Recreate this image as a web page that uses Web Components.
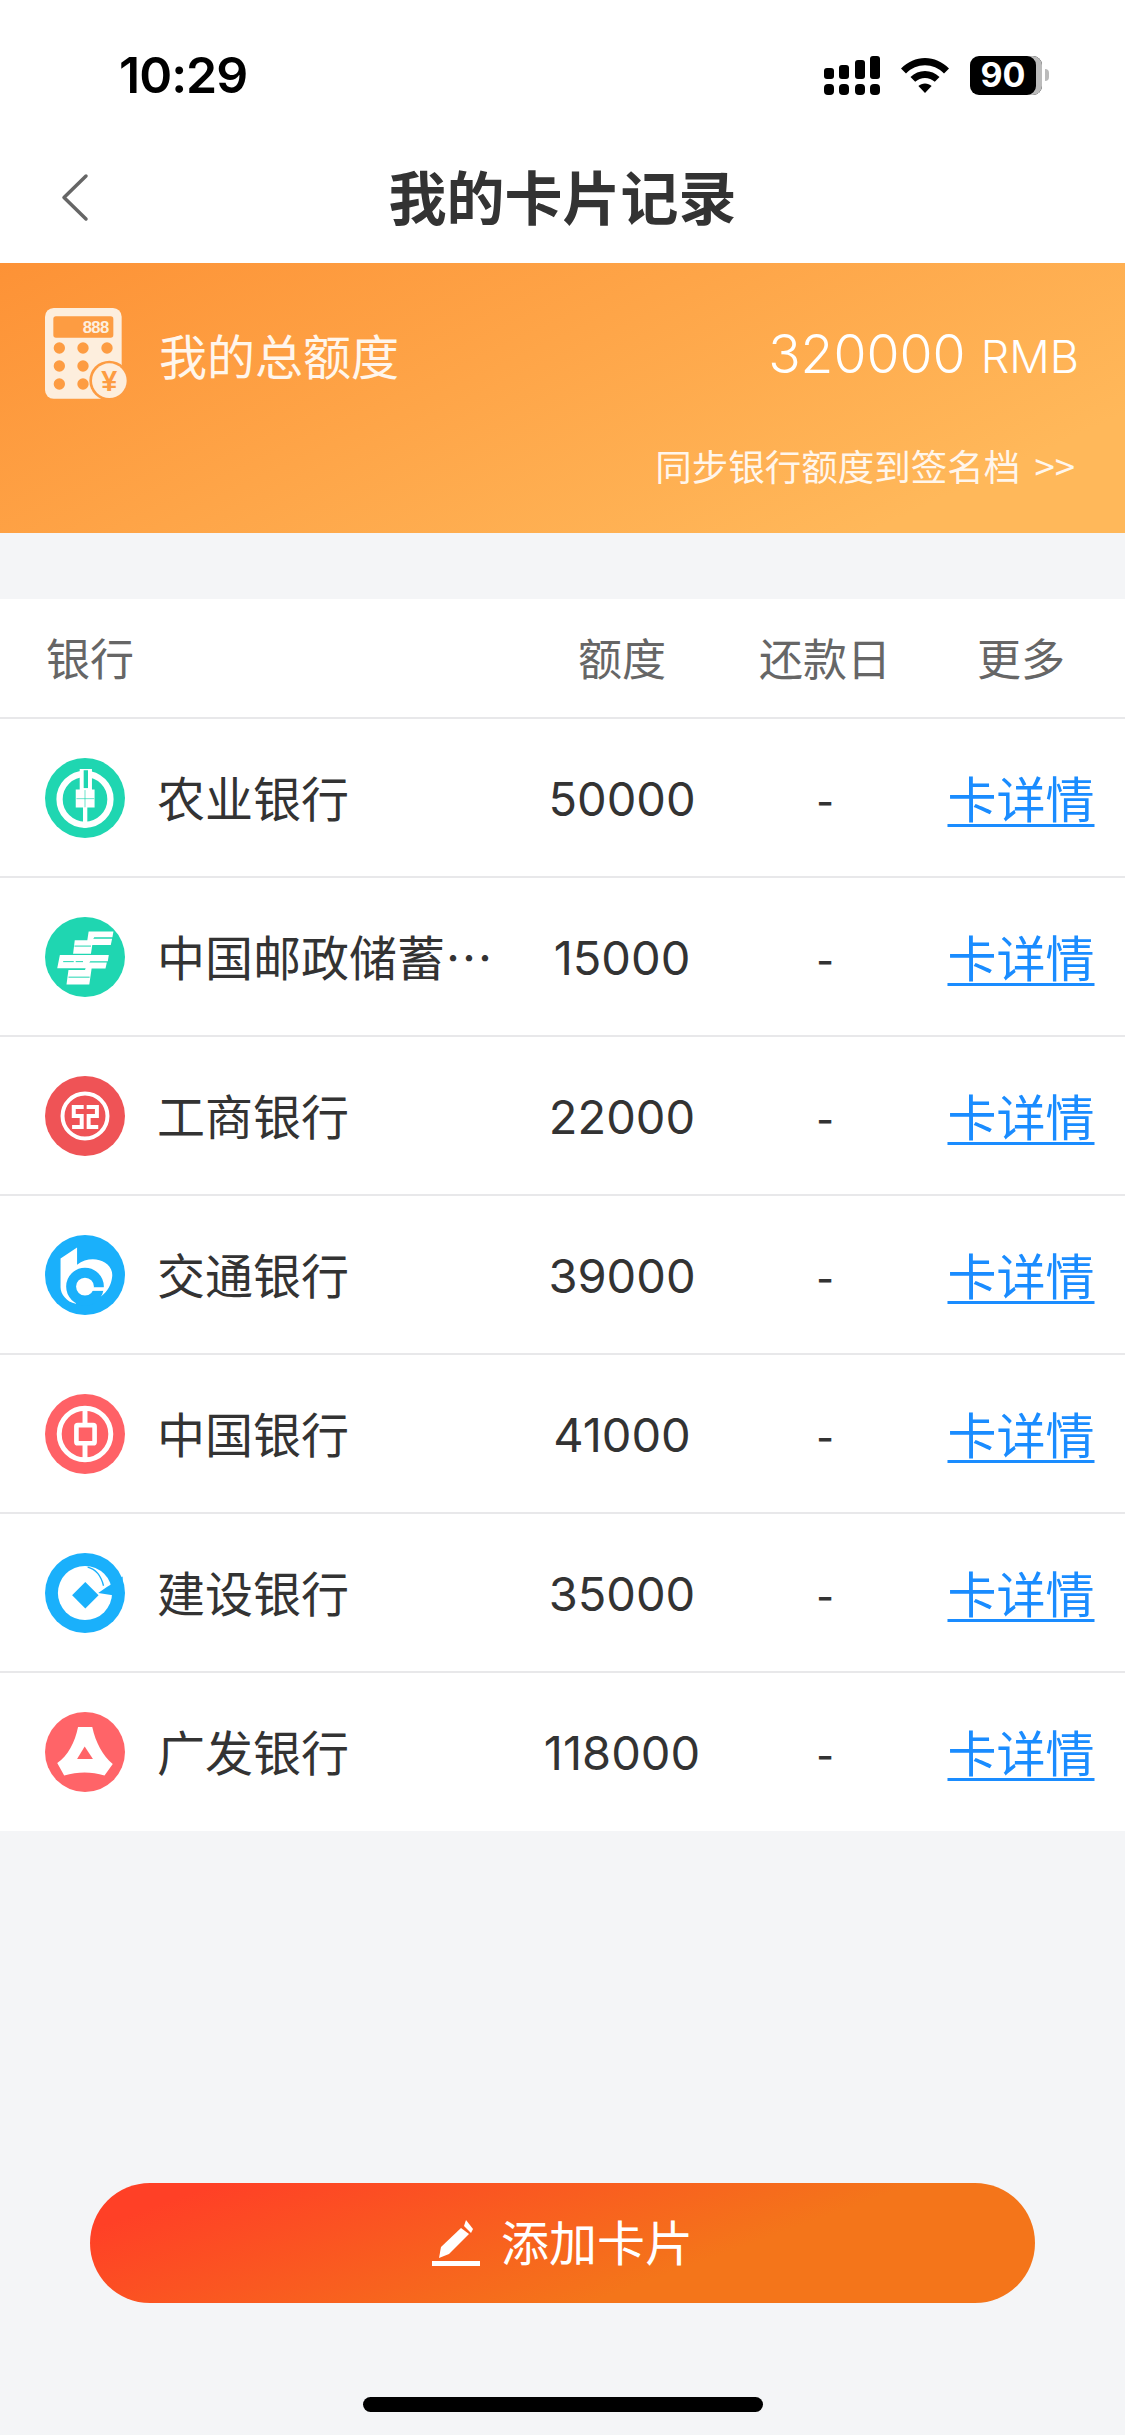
<!DOCTYPE html>
<html lang="zh">
<head>
<meta charset="utf-8">
<title>我的卡片记录</title>
<style>
    html, body { margin: 0; padding: 0; background: #f4f5f7; }
    body { font-family: "Noto Sans CJK SC", "Noto Sans", sans-serif; color: #333; }
</style>
</head>
<body>
<card-page>
    <status-bar slot="top" time="10:29" battery="90"></status-bar>
    <nav-bar slot="top">我的卡片记录</nav-bar>
    <limit-banner slot="top" total="320000" unit="RMB" link="同步银行额度到签名档 &gt;&gt;">我的总额度</limit-banner>
    <card-table>
        <card-row bank="abc" amount="50000">农业银行</card-row>
        <card-row bank="psbc" amount="15000">中国邮政储蓄银行</card-row>
        <card-row bank="icbc" amount="22000">工商银行</card-row>
        <card-row bank="bocom" amount="39000">交通银行</card-row>
        <card-row bank="boc" amount="41000">中国银行</card-row>
        <card-row bank="ccb" amount="35000">建设银行</card-row>
        <card-row bank="cgb" amount="118000">广发银行</card-row>
    </card-table>
    <add-button slot="bottom">添加卡片</add-button>
    <home-indicator slot="bottom"></home-indicator>
</card-page>

<script>
class CardPage extends HTMLElement {
    constructor() {
        super();
        this.attachShadow({ mode: 'open' });
        this.shadowRoot.innerHTML = `
            <style>
                :host { display: flex; flex-direction: column; width: 1125px; height: 2435px; overflow: hidden; background: #f4f5f7; }
                main { flex: 1; padding-top: 66px; }
            </style>
            <slot name="top"></slot>
            <main><slot></slot></main>
            <slot name="bottom"></slot>
        `;
    }
}

class StatusBar extends HTMLElement {
    constructor() {
        super();
        this.attachShadow({ mode: 'open' });
    }

    connectedCallback() {
        const time = this.getAttribute('time');
        const battery = this.getAttribute('battery');
        this.shadowRoot.innerHTML = `
            <style>
                :host { display: flex; justify-content: space-between; align-items: center; height: 135px; padding: 15px 76px 0 119px; box-sizing: border-box; background: #fff; color: #000; }
                .time { font: 600 50px/1 Inter, "Liberation Sans", sans-serif; letter-spacing: -1px; }
                .icons { display: flex; align-items: center; gap: 21px; }
                svg { display: block; }
                .battery { display: flex; align-items: center; gap: 3px; }
                .cell { width: 66px; height: 39px; padding-right: 6px; border-radius: 9px; background: #000; color: #fff; box-shadow: inset -6px 0 0 #bbb; display: flex; align-items: center; justify-content: center; font: 700 34px/1 Inter, "Liberation Sans", sans-serif; }
                .nub { width: 4px; height: 12px; border-radius: 0 6px 6px 0; background: #bbb; }
            </style>
            <span class="time">${time}</span>
            <div class="icons">
                <svg width="56" height="39" viewBox="0 0 56 39" fill="#000">
                    <rect x="0" y="12" width="10" height="11" rx="3"/><rect x="15" y="9" width="10" height="14" rx="3"/>
                    <rect x="31" y="4" width="10" height="19" rx="3"/><rect x="46" y="0" width="10" height="23" rx="3"/>
                    <rect x="0" y="28" width="10" height="11" rx="4"/><rect x="15" y="28" width="10" height="11" rx="4"/>
                    <rect x="31" y="28" width="10" height="11" rx="4"/><rect x="46" y="28" width="10" height="11" rx="4"/>
                </svg>
                <svg width="48" height="35" viewBox="0 0 48 35" fill="#000">
                    <path d="M24 0C33 0 41 3.600 48 10.500L43 15.500C37.500 10 31 7.300 24 7.300S10.500 10 5 15.500L0 10.500C7 3.600 15 0 24 0Z"/>
                    <path d="M24 13C29.500 13 34.500 15 38.500 19L33.800 23.800C31 21.300 27.600 20 24 20S17 21.300 14.200 23.800L9.500 19C13.500 15 18.500 13 24 13Z"/>
                    <path d="M24 25.500C26.600 25.500 28.800 26.400 30.600 28L24 35L17.400 28C19.200 26.400 21.400 25.500 24 25.500Z"/>
                </svg>
                <div class="battery"><div class="cell">${battery}</div><div class="nub"></div></div>
            </div>
        `;
    }
}

class NavBar extends HTMLElement {
    constructor() {
        super();
        this.attachShadow({ mode: 'open' });
        this.shadowRoot.innerHTML = `
            <style>
                :host { display: grid; grid-template-columns: 120px 1fr 120px; align-items: center; height: 128px; padding-bottom: 8px; box-sizing: border-box; background: #fff; }
                svg { display: block; margin: 5px 0 0 60px; }
                h1 { margin: 0; text-align: center; font-size: 58px; line-height: 1; font-weight: 700; color: #333; }
            </style>
            <svg width="30" height="49" viewBox="0 0 30 49" fill="none" stroke="#666" stroke-width="3.500" stroke-linecap="round" stroke-linejoin="round"><path d="M26 3L4 24.500L26 46"/></svg>
            <h1><slot></slot></h1>
            <span></span>
        `;
    }
}

class LimitBanner extends HTMLElement {
    constructor() {
        super();
        this.attachShadow({ mode: 'open' });
    }

    connectedCallback() {
        this.shadowRoot.innerHTML = `
            <style>
                :host { display: flex; flex-direction: column; justify-content: space-between; height: 270px; padding: 45px 50px 49px 45px; box-sizing: border-box; background: linear-gradient(155deg, #fd9236 0%, #ffb85a 85%); color: #fff; }
                .top { display: flex; align-items: center; height: 92px; }
                svg { display: block; flex: none; margin-right: 31px; }
                .label { font-size: 48px; font-weight: 400; line-height: 1; color: #fff6ec; }
                .total { margin-left: auto; margin-right: -4px; font: 350 53.500px/1 Inter, "Noto Sans", sans-serif; color: #fff; }
                .total small { font-size: 45px; }
                .link { text-align: right; font-size: 36.500px; font-weight: 400; line-height: 1; word-spacing: 6px; color: #fff6ec; }
            </style>
            <div class="top">
                <svg width="83" height="92" viewBox="47 58 249 276">
                    <rect x="47" y="58" width="230" height="272" rx="26" fill="#fdeedd"/>
                    <rect x="72" y="83" width="180" height="64" rx="8" fill="#fd9c42"/>
                    <text x="240" y="134" text-anchor="end" textLength="80" font-family="Liberation Sans" font-weight="700" font-size="50" fill="#fdeedd">888</text>
                    <g fill="#fd9c42">
                        <circle cx="90" cy="178" r="17"/><circle cx="161" cy="178" r="17"/><circle cx="233" cy="178" r="17"/>
                        <circle cx="90" cy="232" r="17"/><circle cx="161" cy="232" r="17"/>
                        <circle cx="90" cy="286" r="17"/><circle cx="161" cy="286" r="17"/>
                        <circle cx="240" cy="276" r="60"/>
                    </g>
                    <circle cx="240" cy="276" r="52" fill="#fdeedd"/>
                    <text x="240" y="306" text-anchor="middle" font-family="Liberation Sans" font-weight="700" font-size="86" fill="#fd9c42">¥</text>
                </svg>
                <span class="label"><slot></slot></span>
                <span class="total">${this.getAttribute('total')} <small>${this.getAttribute('unit')}</small></span>
            </div>
            <div class="link">${this.getAttribute('link')}</div>
        `;
    }
}

class CardTable extends HTMLElement {
    constructor() {
        super();
        this.attachShadow({ mode: 'open' });
        this.shadowRoot.innerHTML = `
            <style>
                :host { display: block; padding-bottom: 1px; background: #fff; --cols: 520px 204px 202px 190px; }
                header { display: grid; grid-template-columns: var(--cols); align-items: center; height: 115px; padding-bottom: 3px; font-size: 44px; color: #666; text-align: center; }
                header span:first-child { text-align: left; padding-left: 46px; }
            </style>
            <header><span>银行</span><span>额度</span><span>还款日</span><span>更多</span></header>
            <slot></slot>
        `;
    }
}

class CardRow extends HTMLElement {
    constructor() {
        super();
        this.attachShadow({ mode: 'open' });
    }

    connectedCallback() {
        this.shadowRoot.innerHTML = `
            <style>
                :host { display: grid; grid-template-columns: var(--cols); align-items: center; height: 159px; border-top: 2px solid #e8e8ea; box-sizing: border-box; font-size: 48px; color: #333; text-align: center; }
                .bank { display: flex; align-items: center; padding-left: 45px; text-align: left; }
                .name { width: 342px; margin-left: 32px; padding-bottom: 3px; overflow: hidden; white-space: nowrap; text-overflow: ellipsis; }
                .amount { padding-top: 2px; font: 47px/1 Inter, "Noto Sans", sans-serif; }
                .due, .more { padding-bottom: 3px; }
                a { font-size: 49px; color: #1a8cff; text-decoration: underline; text-decoration-thickness: 3px; text-underline-offset: 6px; }
            </style>
            <div class="bank"><bank-icon name="${this.getAttribute('bank')}"></bank-icon><div class="name"><slot></slot></div></div>
            <div class="amount">${this.getAttribute('amount')}</div>
            <div class="due">-</div>
            <div class="more"><a href="#">卡详情</a></div>
        `;
    }
}

// logos are traced in the coordinates of the zoomed crops, hence the odd viewBoxes
const BANK_LOGOS = {
    abc: { color: '#1fd6b1', cy: 176, body: c => `
        <circle cx="196" cy="180" r="77" fill="none" stroke="#fff" stroke-width="19"/>
        <path d="M180 88H217V150H225V205H203V265H190V205H168V150H180Z" fill="#fff"/>
        <path d="M192 92H205V146H192Z" fill="${c}"/>
        <path d="M170 178H224M196 152V204" stroke="${c}" stroke-width="2"/>` },
    psbc: { color: '#1fd6b1', cy: 173, body: c => `
        <g fill="#fff">
            <path d="M207 96H282L279 113H224L221 118H278L274 137H218L214 163H160L165 122H203Z"/>
            <path d="M120 167H268L265 186H212L209 190H262L258 208H216L209 256H140L146 212H196L198 207H112Z"/>
        </g>
        <path d="M130 187H162M168 187H190" stroke="${c}" stroke-width="3" fill="none"/>
        <path d="M164 140H214M146 234H210" stroke="${c}" stroke-width="3" fill="none"/>` },
    icbc: { color: '#ef5356', cy: 170, body: c => `
        <circle cx="196" cy="170" r="68" fill="none" stroke="#fff" stroke-width="12"/>
        <path d="M192 143H162V170H186V203H157" fill="none" stroke="#fff" stroke-width="12"/>
        <path d="M201 143H232V170H207V203H236" fill="none" stroke="#fff" stroke-width="12"/>` },
    bocom: { color: '#1ab0fb', cy: 168, body: c => `
        <path d="M122 118L172 85V137C215 102 285 125 278 175C275 198 265 218 245 232H180L168 255C140 250 122 225 122 205Z" fill="#fff"/>
        <circle cx="196" cy="203" r="42" fill="none" stroke="${c}" stroke-width="30"/>
        <path d="M215 205H255V216H215Z" fill="#fff"/>` },
    boc: { color: '#ff6166', cy: 163, body: c => `
        <circle cx="196" cy="163" r="78" fill="none" stroke="#fff" stroke-width="15"/>
        <path d="M196 85V241" stroke="#fff" stroke-width="15"/>
        <rect x="170" y="136" width="55" height="55" rx="4" fill="${c}" stroke="#fff" stroke-width="14"/>` },
    ccb: { color: '#1ab0fb', cy: 190, body: c => `
        <circle cx="196" cy="190" r="82" fill="#fff"/>
        <path d="M236 190L280 197L310 197V140L282 160L262 172Z" fill="${c}"/>
        <path d="M197 157L237 197L197 237L157 197Z" fill="${c}"/>
        <path d="M204 112C228 118 245 140 252 168" fill="none" stroke="${c}" stroke-width="4"/>` },
    cgb: { color: '#ff6468', cy: 189, body: c => `
        <path d="M175 113H218C228 160 250 200 280 225L255 260C215 248 175 248 133 260L112 222C145 200 165 160 175 113Z" fill="#fff"/>
        <path d="M195 172L220 210H172Z" fill="${c}"/>` }
};

class BankIcon extends HTMLElement {
    constructor() {
        super();
        this.attachShadow({ mode: 'open' });
    }

    connectedCallback() {
        const logo = BANK_LOGOS[this.getAttribute('name')];
        this.shadowRoot.innerHTML = `
            <style>
                :host { display: block; flex: none; width: 80px; height: 80px; }
                svg { display: block; }
            </style>
            <svg width="80" height="80" viewBox="75 ${logo.cy - 121} 242 242">
                <circle cx="196" cy="${logo.cy}" r="121" fill="${logo.color}"/>
                ${logo.body(logo.color)}
            </svg>
        `;
    }
}

class AddButton extends HTMLElement {
    constructor() {
        super();
        this.attachShadow({ mode: 'open' });
        this.shadowRoot.innerHTML = `
            <style>
                :host { display: block; padding: 0 90px 94px; }
                button { display: flex; align-items: center; justify-content: center; gap: 21px; width: 100%; height: 120px; border: 0; border-radius: 60px; background: linear-gradient(160deg, #ff4026 10%, #f4751a 65%); color: #fff; font: 48px/1 "Noto Sans CJK SC", sans-serif; }
                svg { display: block; }
                span { padding-bottom: 6px; }
            </style>
            <button>
                <svg width="48" height="46" viewBox="0 0 48 46" fill="#fff">
                    <path d="M34 0L41 9L39 13L32 6Z"/>
                    <path d="M29 8L37 14L17 34L7 38L9 27Z"/>
                    <rect x="0" y="41" width="48" height="5"/>
                </svg>
                <span><slot></slot></span>
            </button>
        `;
    }
}

class HomeIndicator extends HTMLElement {
    constructor() {
        super();
        this.attachShadow({ mode: 'open' });
        this.shadowRoot.innerHTML = `
            <style>
                :host { display: flex; justify-content: center; padding-bottom: 23px; }
                div { width: 400px; height: 15px; border-radius: 8px; background: #000; }
            </style>
            <div></div>
        `;
    }
}

customElements.define('card-page', CardPage);
customElements.define('status-bar', StatusBar);
customElements.define('nav-bar', NavBar);
customElements.define('limit-banner', LimitBanner);
customElements.define('card-table', CardTable);
customElements.define('card-row', CardRow);
customElements.define('bank-icon', BankIcon);
customElements.define('add-button', AddButton);
customElements.define('home-indicator', HomeIndicator);
</script>
</body>
</html>
